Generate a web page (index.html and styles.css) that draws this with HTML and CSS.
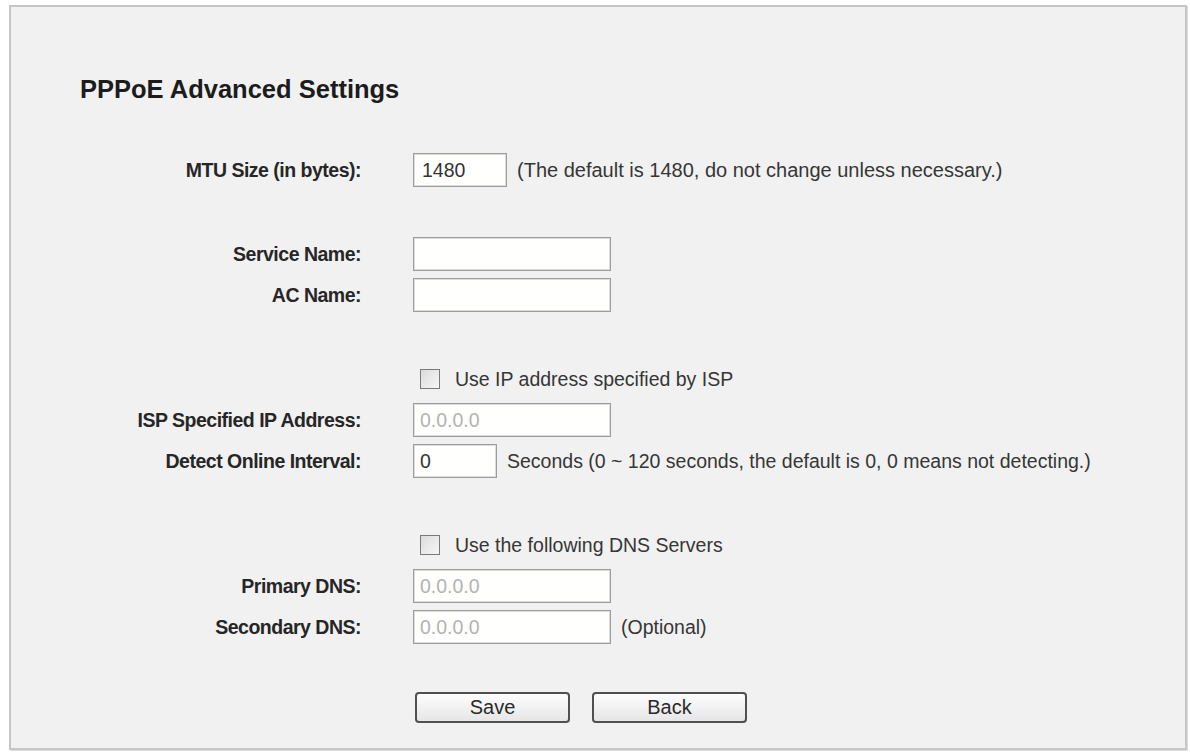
FILE: index.html
```html
<!DOCTYPE html>
<html lang="en">
<head>
  <meta charset="UTF-8">
  <title>PPPoE Advanced Settings</title>
  <link rel="stylesheet" href="styles.css">
</head>
<body>
  <div class="panel">
    <h1 class="title">PPPoE Advanced Settings</h1>

    <!-- MTU -->
    <div class="group">
      <div class="row">
        <label class="label" for="mtu">MTU Size (in bytes):</label>
        <input class="field short" id="mtu" type="text" value="1480">
        <span class="note wide">(The default is 1480, do not change unless necessary.)</span>
      </div>
    </div>

    <!-- Service / AC names -->
    <div class="group">
      <div class="row">
        <label class="label" for="service">Service Name:</label>
        <input class="field" id="service" type="text">
      </div>
      <div class="row">
        <label class="label" for="acName">AC Name:</label>
        <input class="field" id="acName" type="text">
      </div>
    </div>

    <!-- ISP address and detect interval -->
    <div class="group">
      <div class="row">
        <span class="label"></span>
        <label class="check"><input type="checkbox" id="useIp"><span>Use IP address specified by ISP</span></label>
      </div>
      <div class="row">
        <label class="label" for="ispIp">ISP Specified IP Address:</label>
        <input class="field" id="ispIp" type="text" value="0.0.0.0" disabled>
      </div>
      <div class="row">
        <label class="label" for="interval">Detect Online Interval:</label>
        <input class="field tiny" id="interval" type="text" value="0">
        <span class="note">Seconds (0 ~ 120 seconds, the default is 0, 0 means not detecting.)</span>
      </div>
    </div>

    <!-- DNS -->
    <div class="group">
      <div class="row">
        <span class="label"></span>
        <label class="check"><input type="checkbox" id="useDns"><span>Use the following DNS Servers</span></label>
      </div>
      <div class="row">
        <label class="label" for="dns1">Primary DNS:</label>
        <input class="field" id="dns1" type="text" value="0.0.0.0" disabled>
      </div>
      <div class="row">
        <label class="label" for="dns2">Secondary DNS:</label>
        <input class="field" id="dns2" type="text" value="0.0.0.0" disabled>
        <span class="note">(Optional)</span>
      </div>
    </div>

    <div class="buttons">
      <button type="button">Save</button>
      <button type="button">Back</button>
    </div>
  </div>
</body>
</html>
```

FILE: styles.css
```css
/* Router settings page */
body {
  margin: 0;
  background-color: #fff;
  font-family: "Liberation Sans", Arial, sans-serif;
  color: #333;
}
.panel {
  margin: 5px 3px 3px 9px;
  padding: 68px 0 25px 0;
  border: 2px solid #c6c6c6;
  background-color: #f1f1f1;
  box-shadow: 1px 1px 0 #dcdcdc;
}
.title {
  margin: 0 0 0 69px;
  font-size: 25.5px;
  line-height: 28px;
  font-weight: bold;
  color: #1c1c1c;
}

/* Form rows */
.group {
  display: flex;
  flex-direction: column;
  gap: 7px;
  margin-top: 50px;
}
.row {
  display: flex;
  align-items: center;
  height: 34px;
}
.label {
  width: 350px;
  margin-right: 52px;
  text-align: right;
  font-size: 19.5px;
  font-weight: bold;
  letter-spacing: -0.5px;
  color: #262626;
}
.field {
  box-sizing: border-box;
  width: 198px;
  height: 34px;
  padding: 0 6px;
  border: 1px solid #9c9c9c;
  box-shadow: inset 0 0 0 1px #dedede;
  background-color: #fffffd;
  font-family: "Liberation Sans", Arial, sans-serif;
  font-size: 19.5px;
  color: #333;
}
.field.short {
  width: 94px;
  padding-left: 8px;
}
.field.tiny {
  width: 84px;
}
.field:disabled {
  color: #b3b3b3;
  background-color: #fffffd;
}
.note {
  margin-left: 10px;
  font-size: 19.5px;
  color: #363636;
  white-space: nowrap;
}
.note.wide {
  font-size: 20px;
}

/* Checkbox rows */
.check {
  display: flex;
  align-items: center;
  font-size: 19.5px;
  color: #363636;
}
.check input {
  appearance: none;
  box-sizing: border-box;
  width: 20px;
  height: 20px;
  margin: 0 15px 0 7px;
  border: 1px solid #7a7a7a;
  background: linear-gradient(135deg, #dcdcdc, #f6f6f6);
}

/* Bottom buttons */
.buttons {
  display: flex;
  gap: 22px;
  margin: 48px 0 0 404px;
}
button {
  box-sizing: border-box;
  width: 155px;
  height: 31px;
  border: 2px solid #505050;
  border-radius: 4px;
  background: linear-gradient(#fdfdfd, #e6e6e6);
  font-family: "Liberation Sans", Arial, sans-serif;
  font-size: 20px;
  color: #2a2a2a;
  cursor: pointer;
}
```
